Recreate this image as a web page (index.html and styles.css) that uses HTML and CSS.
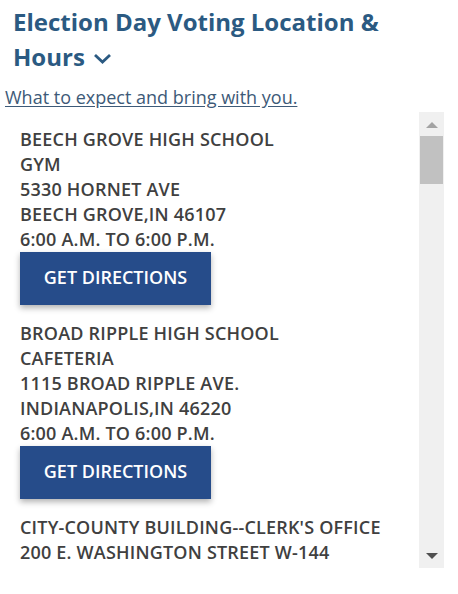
FILE: index.html
```html
<!DOCTYPE html>
<html lang="en">
<head>
    <meta charset="UTF-8">
    <meta name="viewport" content="width=device-width, initial-scale=1.0">
    <title>Election Day Voting Location &amp; Hours</title>
    <link rel="stylesheet" href="styles.css">
</head>
<body>

<div class="panel">
    <h2 class="panel-title">
        Election Day Voting Location &amp; Hours
        <svg class="chevron" width="19" height="11" viewBox="0 0 19 11"><path d="M2 2 L9.5 9 L17 2" fill="none" stroke="#2b5a82" stroke-width="2.8"/></svg>
    </h2>
    <a class="info-link" href="#">What to expect and bring with you.</a>

    <div class="locations">
        <div class="locations-list">
            <div class="location">
                <p>BEECH GROVE HIGH SCHOOL</p>
                <p>GYM</p>
                <p>5330 HORNET AVE</p>
                <p>BEECH GROVE,IN 46107</p>
                <p>6:00 A.M. TO 6:00 P.M.</p>
                <button type="button">GET DIRECTIONS</button>
            </div>
            <div class="location">
                <p>BROAD RIPPLE HIGH SCHOOL</p>
                <p>CAFETERIA</p>
                <p>1115 BROAD RIPPLE AVE.</p>
                <p>INDIANAPOLIS,IN 46220</p>
                <p>6:00 A.M. TO 6:00 P.M.</p>
                <button type="button">GET DIRECTIONS</button>
            </div>
            <div class="location">
                <p>CITY-COUNTY BUILDING--CLERK'S OFFICE</p>
                <p>200 E. WASHINGTON STREET W-144</p>
            </div>
        </div>

        <!-- scrollbar -->
        <div class="scrollbar">
            <span class="arrow up"></span>
            <div class="track">
                <div class="thumb"></div>
            </div>
            <span class="arrow down"></span>
        </div>
    </div>
</div>

</body>
</html>
```

FILE: styles.css
```css
* {
    box-sizing: border-box;
    margin: 0;
    padding: 0;
}

body {
    font-family: 'Open Sans', sans-serif;
    background-color: #fff;
    color: #444;
}

.panel {
    padding: 4px 5px 0;
}

.panel-title {
    font-size: 24px;
    font-weight: 700;
    line-height: 35px;
    color: #2b5a82;
    padding-left: 8px;
    padding-right: 60px;
}

.chevron {
    margin-left: 2px;
    vertical-align: 2px;
}

.info-link {
    display: inline-block;
    margin-top: 11px;
    font-size: 18px;
    color: #3d5a78;
    text-decoration: underline;
    text-underline-offset: 2px;
}

.locations {
    display: flex;
    height: 456px;
    margin-top: 3px;
}

.locations-list {
    flex: 1;
    overflow: hidden;
    padding: 15px 0 0 15px;
}

.location {
    margin-bottom: 16px;
}

.location p {
    font-size: 18px;
    font-weight: 600;
    line-height: 25px;
    letter-spacing: 0.2px;
    color: #404040;
    white-space: nowrap;
}

.location button {
    background-color: #264c8a;
    color: #fff;
    font-family: inherit;
    font-size: 18px;
    font-weight: 600;
    width: 191px;
    height: 53px;
    padding-bottom: 3px;
    border: none;
    box-shadow: 0 3px 6px rgba(0, 0, 0, 0.3);
    cursor: pointer;
}

.scrollbar {
    width: 25px;
    margin-right: 9px;
    background-color: #f0f0f0;
    display: flex;
    flex-direction: column;
    align-items: center;
}

.track {
    flex: 1;
    width: 100%;
}

.thumb {
    height: 48px;
    margin: 0 1px;
    background-color: #c1c1c1;
}

.arrow {
    width: 0;
    height: 0;
    border-left: 6px solid transparent;
    border-right: 6px solid transparent;
}

.arrow.up {
    margin: 10px 0 8px;
    border-bottom: 6px solid #a3a3a3;
}

.arrow.down {
    margin: 8px 0 9px;
    border-top: 6px solid #505050;
}
```
